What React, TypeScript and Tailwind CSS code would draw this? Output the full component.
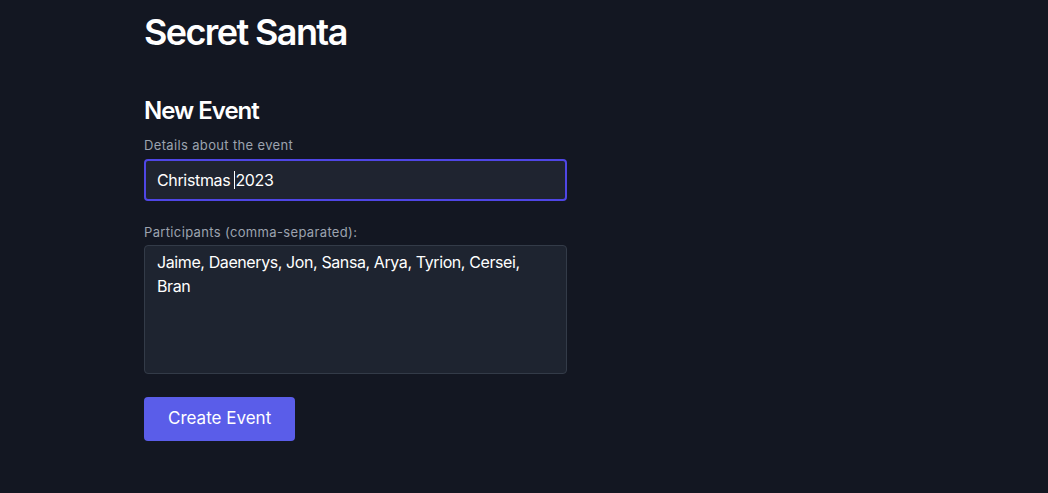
export default function App() {
  return (
    <div className="min-h-screen bg-[#131722] font-['Inter',sans-serif] text-white">
      <div className="pl-[144px] pt-[12px]">
        <h1 className="text-[36px] font-semibold leading-[40px] tracking-[-1.6px]">Secret Santa</h1>

        <div className="mt-[43px] w-[423px]">
          <h2 className="text-[24px] font-semibold leading-[32px] tracking-[-1px]">New Event</h2>

          <label className="mt-[8px] block text-[13px] leading-[20px] tracking-[0.35px] text-[#9ca3af]">
            Details about the event
          </label>
          <div className="mt-[4px] flex h-[42px] items-center rounded-[4px] border-2 border-[#4f46e5] bg-[#1f2430] px-[11px] text-[16px] tracking-[-0.35px]">
            <span className="whitespace-pre">Christmas </span>
            <span className="h-[18px] w-px bg-white" />
            <span>2023</span>
          </div>

          <label className="mt-[21px] block text-[13px] leading-[20px] tracking-[0.35px] text-[#9ca3af]">
            Participants (comma-separated):
          </label>
          <div className="mt-[3px] h-[129px] rounded-[4px] border border-[#333b48] bg-[#1e2430] px-[12px] pt-[4px] text-[16px] leading-[24px] tracking-[-0.4px]">
            Jaime, Daenerys, Jon, Sansa, Arya, Tyrion, Cersei,
            <br />
            Bran
          </div>

          <button
            type="button"
            className="mt-[23px] h-[44px] rounded-[4px] bg-[#5a5de9] px-6 text-[17px] text-white"
          >
            Create Event
          </button>
        </div>
      </div>
    </div>
  )
}
